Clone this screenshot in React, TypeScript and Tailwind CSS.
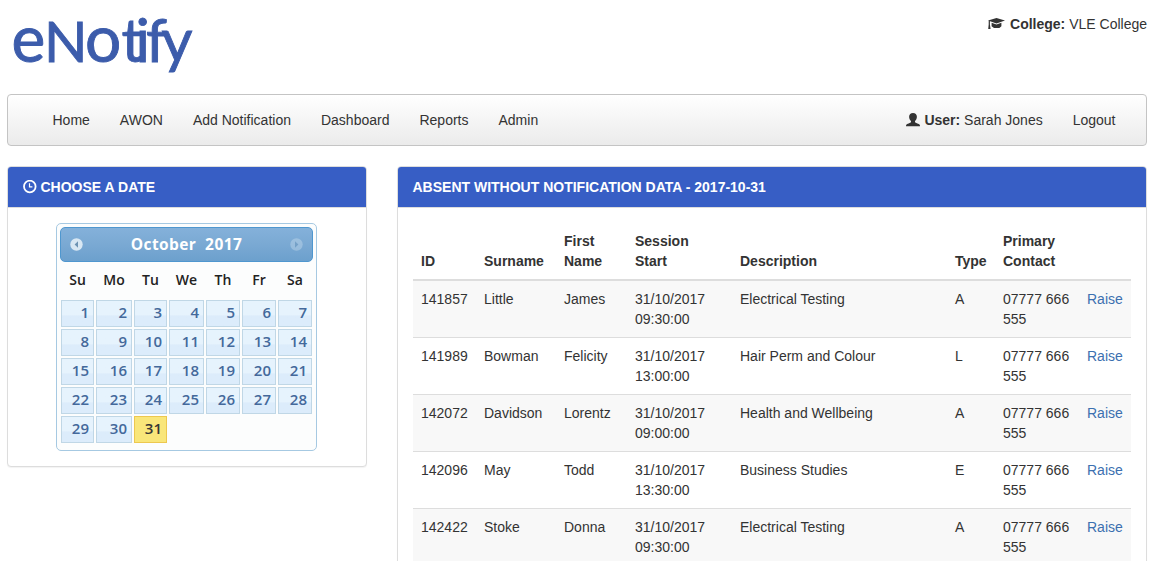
import React from "react";

const navLinks = ["Home", "AWON", "Add Notification", "Dashboard", "Reports", "Admin"];

const weekDays = ["Su", "Mo", "Tu", "We", "Th", "Fr", "Sa"];

const weeks = [
  [1, 2, 3, 4, 5, 6, 7],
  [8, 9, 10, 11, 12, 13, 14],
  [15, 16, 17, 18, 19, 20, 21],
  [22, 23, 24, 25, 26, 27, 28],
  [29, 30, 31, null, null, null, null],
];

const selectedDay = 31;

const absences = [
  { id: "141857", surname: "Little", firstName: "James", date: "31/10/2017", time: "09:30:00", description: "Electrical Testing", type: "A" },
  { id: "141989", surname: "Bowman", firstName: "Felicity", date: "31/10/2017", time: "13:00:00", description: "Hair Perm and Colour", type: "L" },
  { id: "142072", surname: "Davidson", firstName: "Lorentz", date: "31/10/2017", time: "09:00:00", description: "Health and Wellbeing", type: "A" },
  { id: "142096", surname: "May", firstName: "Todd", date: "31/10/2017", time: "13:30:00", description: "Business Studies", type: "E" },
  { id: "142422", surname: "Stoke", firstName: "Donna", date: "31/10/2017", time: "09:30:00", description: "Electrical Testing", type: "A" },
];

function Logo() {
  return (
    <svg width="200" height="80" viewBox="0 0 200 80" className="block" role="img" aria-label="eNotify">
      <text y="62" fill="#3c5cab" stroke="#3c5cab" strokeWidth="0.9" fontFamily="Lato, sans-serif">
        <tspan x="4.500" fontSize="64">e</tspan>
        <tspan x="37" fontSize="57">N</tspan>
        <tspan x="78" fontSize="64">o</tspan>
        <tspan x="114.500 128.500 139 154.500" fontSize="60">tify</tspan>
      </text>
    </svg>
  );
}

function CapIcon() {
  return (
    <svg width="17" height="14" viewBox="0 0 17 14" className="-ml-px inline-block" fill="currentColor">
      <path d="M8.500 1 17 3.600 8.500 6.400 0 3.600z" />
      <path d="M3.600 5.700 8.500 7.400 13.400 5.700v3.600l-2 1.700H6l-2.400-1.700z" />
      <path d="M.7 3.800h1.200v3.700l.7 4.500H.2l.5-4.500z" />
    </svg>
  );
}

function UserIcon() {
  return (
    <svg width="14" height="14" viewBox="0 0 14 14" className="inline-block" fill="currentColor">
      <path d="M7 0c2.300 0 3.900 1.500 3.900 3.700 0 1.800-.8 3.400-1.900 4.400v1.200c.5.8 4.200 1.500 4.700 2.500.3.500.3 1 .3 1.500H0c0-.5 0-1 .3-1.500.5-1 4.200-1.700 4.700-2.500V8.100c-1.100-1-1.900-2.600-1.900-4.400C3.100 1.500 4.700 0 7 0z" />
    </svg>
  );
}

function ClockIcon() {
  return (
    <svg width="14" height="14" viewBox="0 0 14 14" className="inline-block" fill="none" stroke="currentColor">
      <circle cx="6.800" cy="6.500" r="5.800" strokeWidth="1.800" />
      <path d="M6.500 3.200v3.600h2.900" strokeWidth="1.200" />
    </svg>
  );
}

function ArrowButton({ next }: { next?: boolean }) {
  return (
    <svg width="13" height="13" viewBox="0 0 13 13" className={next ? "opacity-35" : ""}>
      <circle cx="6.500" cy="6.500" r="6.200" fill="#d8e7f3" />
      <path d={next ? "M5 3.300v6.400l3.400-3.200z" : "M8 3.300v6.400L4.600 6.500z"} fill="#6d93b3" />
    </svg>
  );
}

function Panel({ title, children }: { title: React.ReactNode; children: React.ReactNode }) {
  return (
    <section className="rounded border border-[#ddd] bg-white shadow-[0_1px_1px_rgba(0,0,0,0.05)]">
      <h3 className="h-[41px] rounded-t-[3px] border-b border-[#ddd] bg-[#375ec5] px-[14.500px] py-[10px] text-sm font-bold text-white">
        {title}
      </h3>
      <div className="p-[15px]">{children}</div>
    </section>
  );
}

function DatePicker() {
  return (
    <div className="ml-[33px] w-[261px] rounded-[5px] border border-[#a6c9e2] bg-[#fcfdfd] p-[3px] pb-[6px] font-['Open_Sans',sans-serif] text-[15px]">
      <div className="flex h-[35px] items-center justify-between rounded-[5px] border border-[#4f97cf] bg-linear-to-b from-[#84b1da] via-[#7aa9d3] via-50% to-[#6ca0cd] px-[9px] pb-px font-bold text-white">
        <ArrowButton />
        <span className="whitespace-pre text-[15.500px] tracking-[0.400px]">October  2017</span>
        <ArrowButton next />
      </div>
      <table className="w-[253px] table-fixed border-collapse">
        <colgroup>
          <col className="w-[35px]" />
          <col className="w-[38px]" />
          <col className="w-[35px]" />
          <col className="w-[37px]" />
          <col className="w-[36px]" />
          <col className="w-[36px]" />
          <col className="w-[36px]" />
        </colgroup>
        <thead>
          <tr className="h-[37px]">
            {weekDays.map((day) => (
              <th key={day} className="p-0 pb-px text-center text-sm leading-5 font-semibold text-[#222]">{day}</th>
            ))}
          </tr>
        </thead>
        <tbody>
          {weeks.map((week, i) => (
            <tr key={i} className="h-[29px]">
              {week.map((day, j) => (
                <td key={j} className="p-px">
                  {day && (
                    <a
                      className={`block h-[27px] border pr-[4px] text-right leading-[23px] font-semibold ${
                        day === selectedDay
                          ? "border-[#edc84f] bg-[#f9e67a] text-[#363636]"
                          : "border-[#c0d7e6] bg-linear-to-b from-[#e6f3fd] from-55% to-[#dcecfb] to-60% text-[#44699b]"
                      }`}
                    >
                      {day}
                    </a>
                  )}
                </td>
              ))}
            </tr>
          ))}
        </tbody>
      </table>
    </div>
  );
}

function AbsenceTable() {
  return (
    <table className="w-[718px] table-fixed border-collapse text-left">
      <colgroup>
        <col className="w-[63px]" />
        <col className="w-[80px]" />
        <col className="w-[71px]" />
        <col className="w-[105px]" />
        <col className="w-[215px]" />
        <col className="w-[48px]" />
        <col className="w-[84px]" />
        <col className="w-[52px]" />
      </colgroup>
      <thead>
        <tr className="border-b-2 border-[#ddd] align-bottom *:p-2">
          <th>ID</th>
          <th>Surname</th>
          <th>First<br />Name</th>
          <th>Session<br />Start</th>
          <th>Description</th>
          <th>Type</th>
          <th>Primary<br />Contact</th>
          <th />
        </tr>
      </thead>
      <tbody>
        {absences.map((row) => (
          <tr key={row.id} className="border-b border-[#ddd] align-top odd:bg-[#f8f8f8] *:p-2">
            <td>{row.id}</td>
            <td>{row.surname}</td>
            <td>{row.firstName}</td>
            <td>{row.date}<br />{row.time}</td>
            <td>{row.description}</td>
            <td>{row.type}</td>
            <td>07777 666<br />555</td>
            <td><a href="#" className="text-[#3c70b0]">Raise</a></td>
          </tr>
        ))}
      </tbody>
    </table>
  );
}

export default function App() {
  return (
    <div className="h-[561px] w-[1164px] overflow-hidden bg-white pr-[17px] pl-[7px] font-['Liberation_Sans',Arial,sans-serif] text-sm leading-5 text-[#333]">
      <header className="flex h-[94px] justify-between">
        <Logo />
        <div className="mt-[14px] flex h-5 items-center gap-[5px]">
          <CapIcon />
          <span><b>College:</b> VLE College</span>
        </div>
      </header>

      <nav className="flex h-[52px] items-center justify-between rounded border border-[#c4c4c4] bg-linear-to-b from-white to-[#ebebeb] pr-[30.500px] pl-[44.500px]">
        <ul className="flex gap-[30px]">
          {navLinks.map((link) => (
            <li key={link}><a href="#">{link}</a></li>
          ))}
        </ul>
        <div className="flex gap-[30px]">
          <a href="#" className="flex items-center gap-1">
            <UserIcon />
            <span><b>User:</b> Sarah Jones</span>
          </a>
          <a href="#">Logout</a>
        </div>
      </nav>

      <main className="mt-5 flex items-start gap-[30px]">
        <div className="w-[360px] shrink-0">
          <Panel title={<span className="flex items-center gap-1"><ClockIcon />CHOOSE A DATE</span>}>
            <DatePicker />
          </Panel>
        </div>
        <div className="w-[750px] shrink-0">
          <Panel title="ABSENT WITHOUT NOTIFICATION DATA - 2017-10-31">
            <AbsenceTable />
          </Panel>
        </div>
      </main>
    </div>
  );
}
